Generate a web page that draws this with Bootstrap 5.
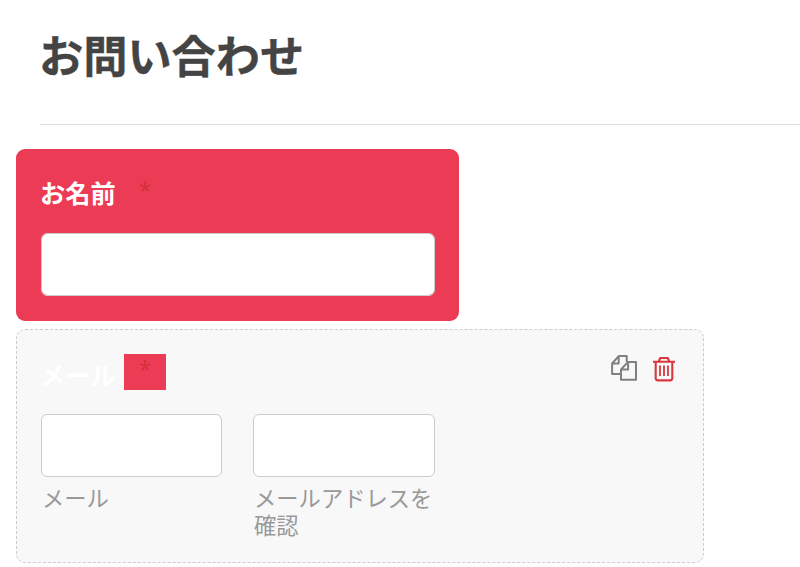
<!DOCTYPE html>
<html lang="ja">
<head>
<meta charset="utf-8">
<meta name="viewport" content="width=device-width, initial-scale=1">
<title>お問い合わせ</title>
<link href="https://cdn.jsdelivr.net/npm/bootstrap@5.3.0/dist/css/bootstrap.min.css" rel="stylesheet">
<style>
body{font-family:"Noto Sans CJK JP",sans-serif;background:#fff;overflow:hidden}
.form-title{font-size:44.2px;line-height:60px;color:#444;padding-top:24px;margin-left:39px;height:124px;-webkit-text-stroke:.4px #444}
.title-rule{margin-left:40px;border-top:1px solid #ddd}
.field{margin-left:16px;border-radius:9px}
.field-name{width:443.4px;height:172px;margin-top:24px;background:#ec3b55;padding:26px 24.4px 0 25px}
.field-mail{width:688px;height:234px;margin-top:8px;background:#f8f8f8;border:1px dashed #ccc;padding:24px 28px 0 24px}
.field-label{font-size:25.2px;line-height:34px;height:36px;color:#fff;width:83px;text-indent:-1px}
.field-mail .field-label{line-height:40px}
.required{width:42px;height:36px;background:#ec3b55;color:#d33038;font-size:23px;line-height:30px;font-family:"Open Sans",sans-serif}
.entry{height:63px;border:1px solid #ccc;border-radius:6px;padding:6px 12px}
.entry:focus{box-shadow:none}
.field-name .entry{margin-top:22px}
.half{width:181px}
.half-confirm{width:182px;margin-left:31px}
.hint{font-size:22.3px;line-height:27px;color:#999;margin:7px -6px 0 1px}
.tool svg{display:block}
</style>
<script src="https://cdn.jsdelivr.net/npm/bootstrap@5.3.0/dist/js/bootstrap.bundle.min.js"></script>
</head>
<body>
<h1 class="form-title fw-bold mb-0">お問い合わせ</h1>
<div class="title-rule"></div>
<form>
  <div class="field field-name">
    <div class="d-flex">
      <label class="field-label fw-bold text-nowrap" for="n">お名前</label>
      <span class="required text-center">*</span>
    </div>
    <input id="n" type="text" class="form-control entry">
  </div>
  <div class="field field-mail">
    <div class="d-flex">
      <label class="field-label fw-bold text-nowrap" for="m">メール</label>
      <span class="required text-center">*</span>
      <div class="tool d-flex ms-auto">
        <svg width="27" height="30" viewBox="0 0 27 30" fill="none" stroke="#808080" stroke-width="2" stroke-linejoin="round"><path d="M10.5 19.9H2.1V9.5L8.7 2.1h8v6M8.7 2.1v7.4H2.1M11 15.5v10.2h15V7.9h-7.9zM18.1 7.9v7.6H11"/></svg>
        <svg class="ms-3" width="22" height="30" viewBox="0 0 22 30" fill="none" stroke="#d7373f" stroke-width="2.1" stroke-linejoin="round"><path d="M0 7.8h22M5.8 7.5l1.4-3.5h7.6l1.4 3.5M2.7 7.8v16.3q0 2.3 2.2 2.3h12.2q2.2 0 2.2-2.3V7.8"/><path stroke-width="1.8" d="M7 11.5v10.6M11 11.5v10.6M15 11.5v10.6"/></svg>
      </div>
    </div>
    <div class="d-flex mt-4">
      <div class="half"><input id="m" type="text" class="form-control entry"><div class="hint">メール</div></div>
      <div class="half-confirm"><input type="text" class="form-control entry"><div class="hint">メールアドレスを<br>確認</div></div>
    </div>
  </div>
</form>
</body>
</html>
